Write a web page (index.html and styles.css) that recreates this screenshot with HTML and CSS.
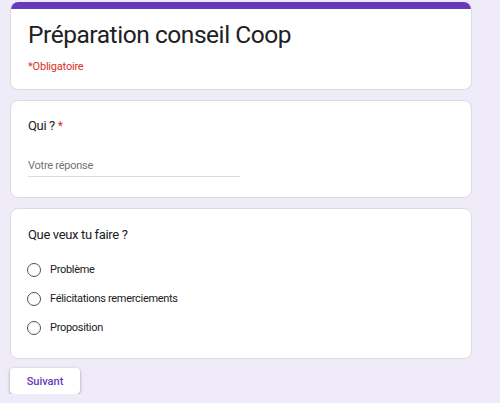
FILE: index.html
```html
<!DOCTYPE html>
<html lang="fr">
<head>
<meta charset="utf-8">
<link rel="stylesheet" href="styles.css">
</head>
<body>
<div class="page">
  <div class="card head-card">
    <div class="bar"></div>
    <div class="head-body">
      <h1 class="title">Préparation conseil Coop</h1>
      <div class="required">*Obligatoire</div>
    </div>
  </div>
  <div class="card q-card">
    <div class="q-title">Qui ? <span class="star">*</span></div>
    <div class="answer">Votre réponse</div>
  </div>
  <div class="card q-card q3">
    <div class="q-title">Que veux tu faire ?</div>
    <div class="options">
      <div class="opt"><span class="radio"></span><span>Problème</span></div>
      <div class="opt"><span class="radio"></span><span>Félicitations remerciements</span></div>
      <div class="opt"><span class="radio"></span><span>Proposition</span></div>
    </div>
  </div>
  <div class="actions">
    <button class="next">Suivant</button>
  </div>
</div>
</body>
</html>
```
FILE: styles.css
```css
html, body {
  margin: 0;
  padding: 0;
  background: #f0ebf8;
  font-family: Roboto, "Liberation Sans", sans-serif;
  color: #202124;
}
.page {
  width: 462px;
  padding: 2px 0 0 10px;
  display: flex;
  flex-direction: column;
  gap: 10px;
}
.card {
  background: #fff;
  border: 1px solid #dadce0;
  border-radius: 8px;
  box-sizing: border-box;
}
.head-card {
  border-top: none;
  overflow: hidden;
  height: 88px;
}
.bar {
  height: 7px;
  background: #673ab7;
}
.head-body {
  padding: 11px 17px 0;
}
.title {
  margin: 0;
  font-weight: 400;
  font-size: 24.5px;
  letter-spacing: -0.45px;
  line-height: 30px;
  color: #202124;
}
.required {
  margin-top: 10px;
  font-size: 11px;
  letter-spacing: -0.2px;
  color: #d93025;
}
.q-card {
  padding: 17px 17px 0;
  height: 98px;
}
.q-title {
  font-size: 13px;
  letter-spacing: -0.35px;
  line-height: 16px;
  color: #202124;
}
.star { color: #d93025; font-size: 12px; }
.answer {
  margin-top: 24px;
  width: 212px;
  font-size: 11px;
  letter-spacing: -0.25px;
  line-height: 16px;
  color: #70757a;
  border-bottom: 1px solid #dadce0;
  padding-bottom: 2px;
}
.q3 { height: 151px; padding-top: 18px; }
.options {
  margin-top: 19px;
  display: flex;
  flex-direction: column;
  gap: 13px;
}
.opt {
  display: flex;
  align-items: center;
  gap: 9px;
  font-size: 11px;
  letter-spacing: -0.3px;
  line-height: 16px;
  color: #202124;
}
.radio {
  width: 12px;
  height: 12px;
  border: 1.5px solid #4d5156;
  border-radius: 50%;
  margin-left: -1px;
}
.actions { margin-top: -1px; }
.next {
  width: 70px;
  height: 26px;
  background: #fff;
  border: none;
  border-radius: 4px;
  box-shadow: 0 1px 2px rgba(60,64,67,.3), 0 1px 3px 1px rgba(60,64,67,.15);
  font-family: Roboto, "Liberation Sans", sans-serif;
  font-size: 11px;
  font-weight: 500;
  color: #673ab7;
  padding: 0;
}
```
